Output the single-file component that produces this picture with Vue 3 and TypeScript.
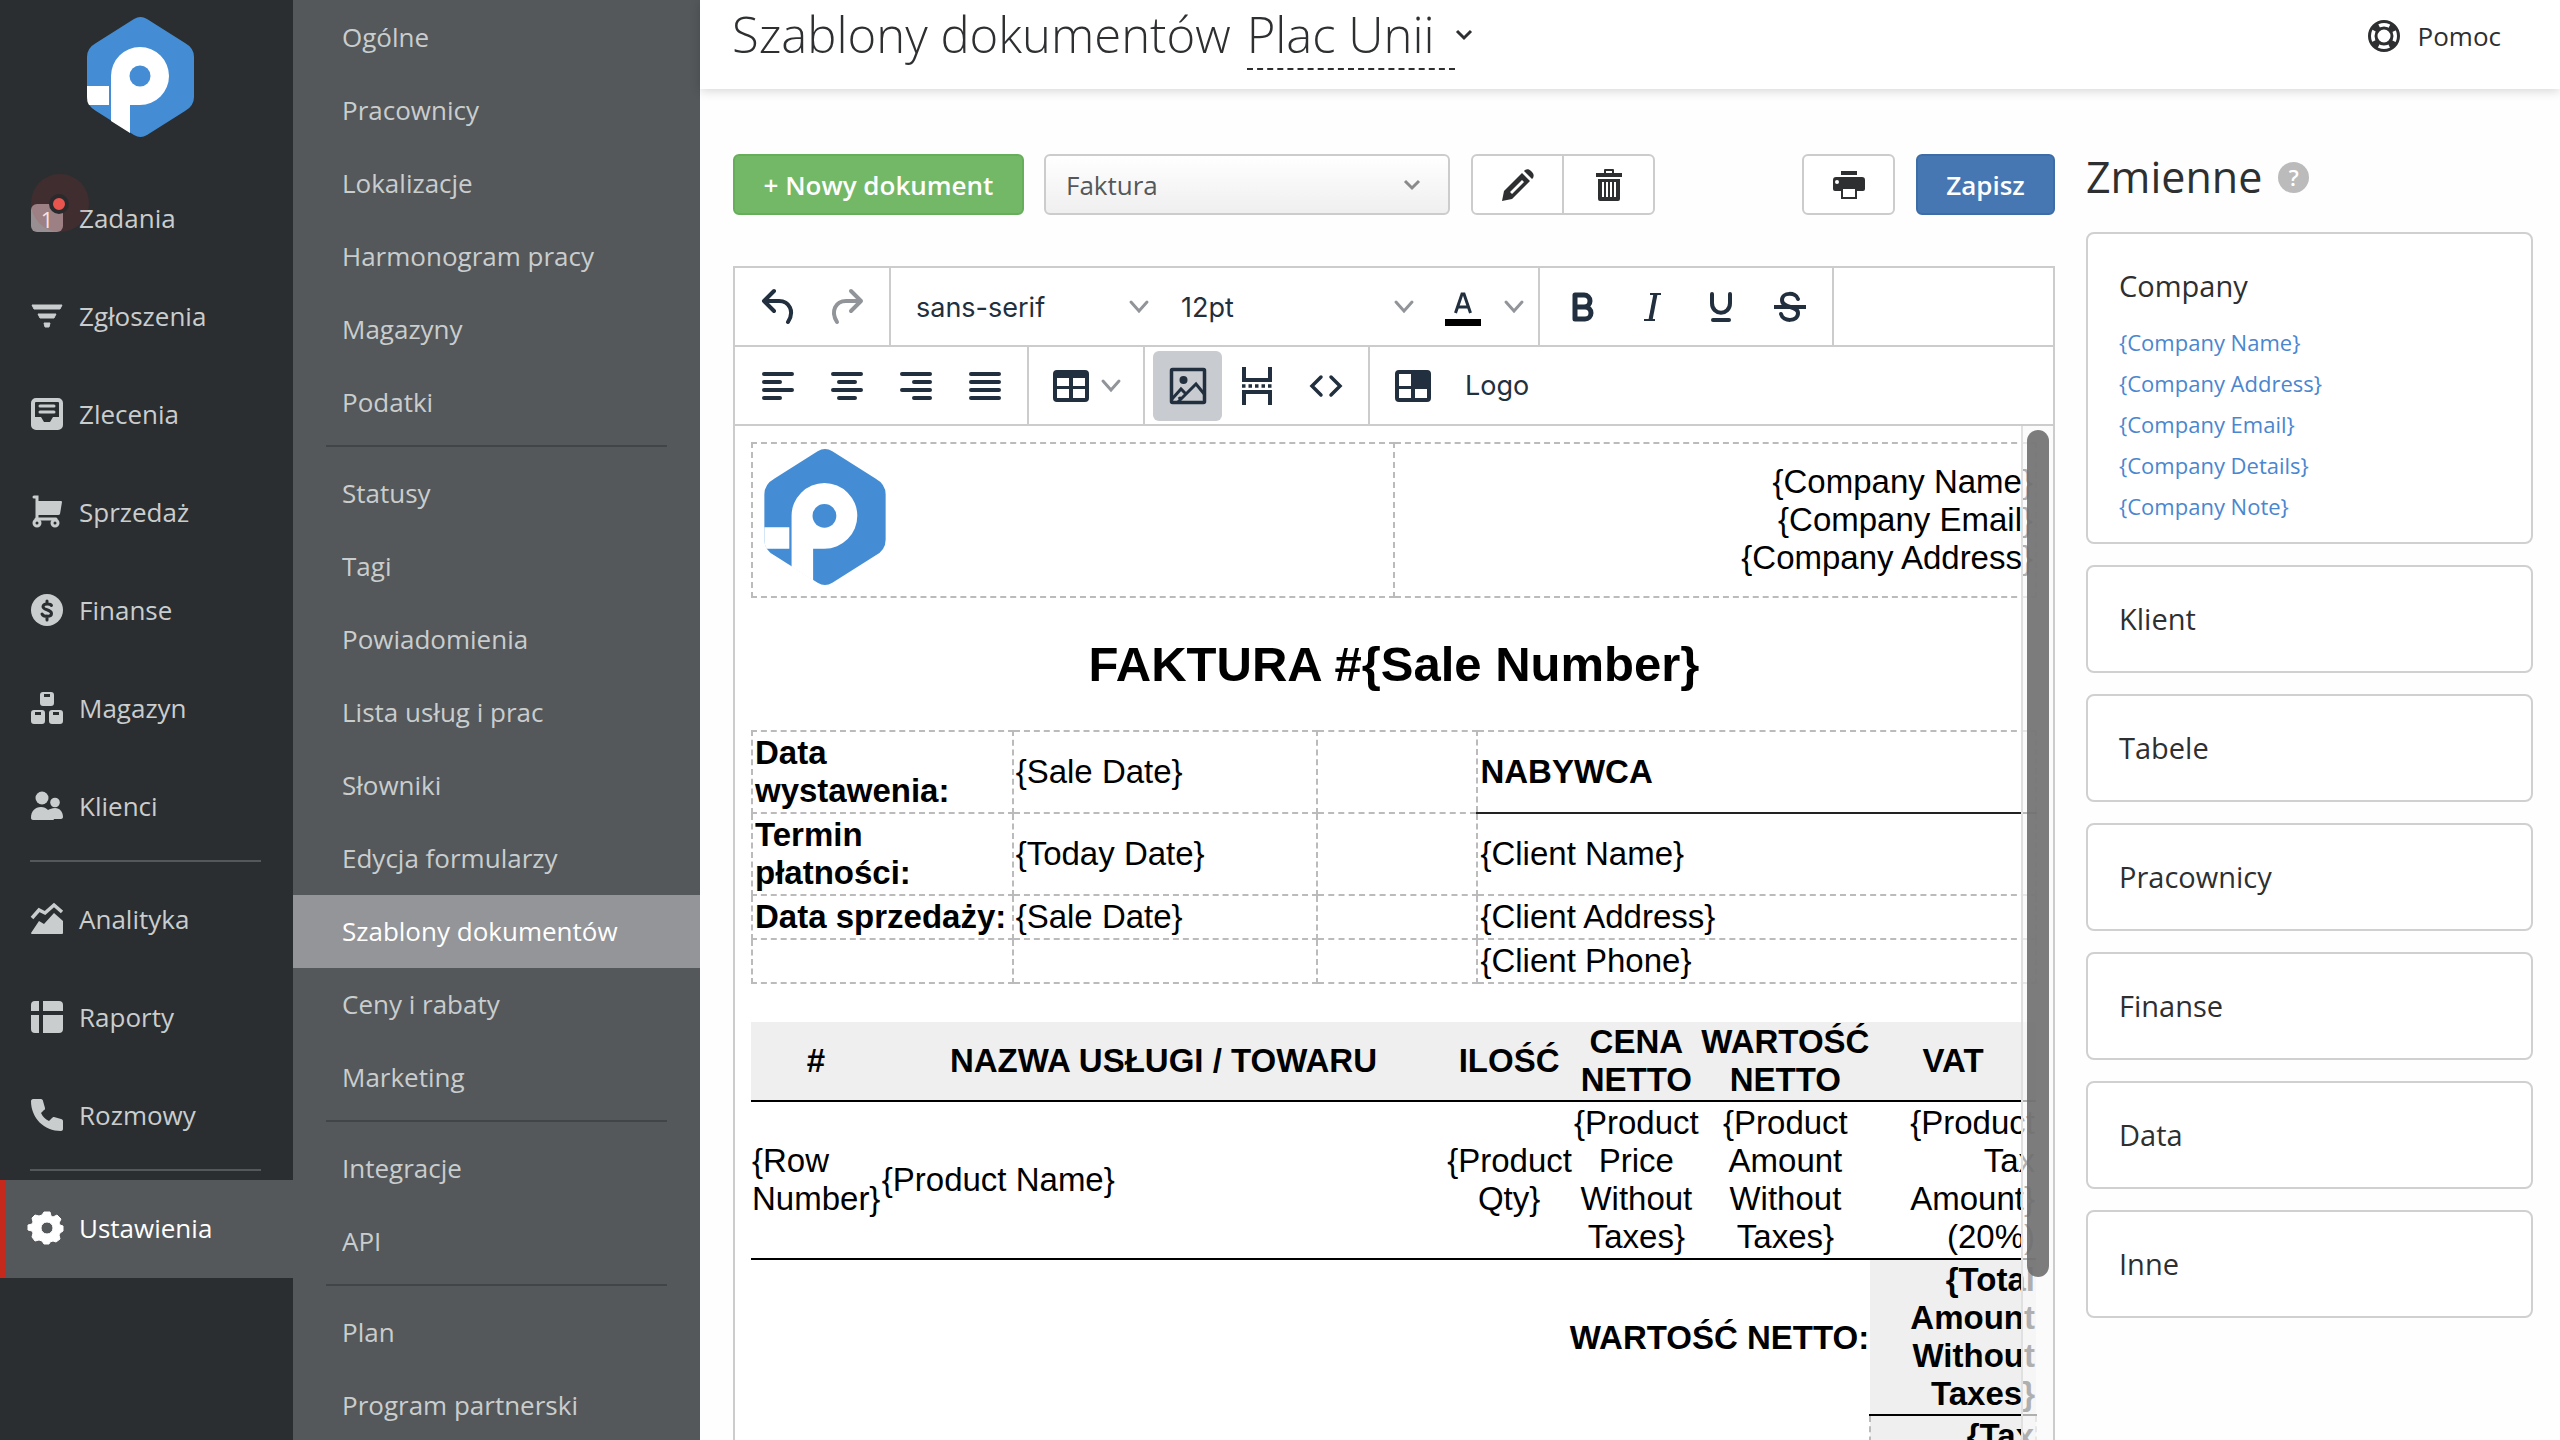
<script setup lang="ts">
import { ref } from 'vue'

interface NavItem { label: string; icon: string; badge?: string; active?: boolean }

const icons: Record<string, string> = {
  requests: '<path d="M1 5h30l-2 4H3zM7 14h18l-2 4H9zM13 23h6l-1 4h-4z" stroke="currentColor" stroke-width="1" stroke-linejoin="round"/>',
  orders: '<path fill-rule="evenodd" d="M5 0h22a5 5 0 0 1 5 5v22a5 5 0 0 1-5 5H5a5 5 0 0 1-5-5V5a5 5 0 0 1 5-5zm0 4a1 1 0 0 0-1 1v14h6l3 5h6l3-5h6V5a1 1 0 0 0-1-1z"/><path d="M9 8h14M9 14h14" stroke="currentColor" stroke-width="3" stroke-linecap="round"/>',
  sales: '<path d="M7 5h23a1 1 0 0 1 1 1l-2 12a2 2 0 0 1-2 1H7z"/><path d="M3 1h3v22M5 23h20" fill="none" stroke="currentColor" stroke-width="3" stroke-linecap="round"/><circle cx="6" cy="27" r="3" fill="none" stroke="currentColor" stroke-width="3"/><circle cx="24" cy="27" r="3" fill="none" stroke="currentColor" stroke-width="3"/>',
  finance: '<circle cx="16" cy="16" r="16"/><path d="M20.500 11.500c-1-2-8-2.500-8.500 1-.4 4 8.500 2.500 8.500 7 0 4-8 3.500-9.500.5M16 7v3M16 22v4" fill="none" stroke="#2a2e30" stroke-width="3" stroke-linecap="round"/>',
  stock: '<path fill-rule="evenodd" d="M12 0h8a3 3 0 0 1 3 3v8a3 3 0 0 1-3 3h-8a3 3 0 0 1-3-3V3a3 3 0 0 1 3-3zm1 2v3h6V2zM3 18h8a3 3 0 0 1 3 3v8a3 3 0 0 1-3 3H3a3 3 0 0 1-3-3v-8a3 3 0 0 1 3-3zm1 2v3h6v-3zM21 18h8a3 3 0 0 1 3 3v8a3 3 0 0 1-3 3h-8a3 3 0 0 1-3-3v-8a3 3 0 0 1 3-3zm1 2v3h6v-3z"/>',
  clients: '<circle cx="11" cy="8" r="6.500"/><circle cx="24" cy="12.500" r="4.800"/><path d="M0 28c0-7 4-11 10-11 3 0 5 1 7 3 2-1 4-2 7-2 5 0 8 4 8 9 0 1-1 2-2 2h-7c0 1-1 1-2 1H2c-1 0-2-1-2-2z"/>',
  analytics: '<path d="M0 30 8 18l5 3 10-11 9 8v12a1 1 0 0 1-1 1H1a1 1 0 0 1-1-1z"/><path d="m1 15 7-8 6 3 9-8 8 7" fill="none" stroke="currentColor" stroke-width="3.500"/>',
  reports: '<path d="M4 0h4v10H0V4a4 4 0 0 1 4-4zM12 0h16a4 4 0 0 1 4 4v6H12zM0 14h8v18H4a4 4 0 0 1-4-4zM12 14h20v14a4 4 0 0 1-4 4H12z"/>',
  calls: '<path d="M2 0h8c1 0 2 1 2 2l2 7c0 1 0 2-1 2l-3 3c2 4 4 6 8 8l3-3c1-1 1-1 2-1l7 2c1 0 2 1 2 2v8c0 1-1 2-2 2C13 32 0 19 0 2c0-1 1-2 2-2z"/>',
  settings: '<path fill-rule="evenodd" d="M13 0h6l1 4 2 1 4-2 4 4-2 4 1 2 3 1v5l-3 2-1 2 1 4-4 3-3-1-3 1-1 2h-5l-2-3-3-1-4 1-3-4 1-4-1-2-4-1v-5l4-1 1-2-1-4 3-3 4 1 3-1zm3 10a6 6 0 1 0 0 12 6 6 0 0 0 0-12z" stroke="currentColor" stroke-width="1" stroke-linejoin="round"/>',
  undo: '<path d="M12 2 2 12l10 10M3 12h14c10 0 16 10 9 21" fill="none" stroke="currentColor" stroke-width="4" stroke-linecap="round" stroke-linejoin="round"/>',
  alignLeft: '<path d="M2 4h28M2 12h16M2 20h28M2 28h16" stroke="currentColor" stroke-width="4" stroke-linecap="round"/>',
  alignCenter: '<path d="M2 4h28M8 12h16M2 20h28M8 28h16" stroke="currentColor" stroke-width="4" stroke-linecap="round"/>',
  alignRight: '<path d="M2 4h28M14 12h16M2 20h28M14 28h16" stroke="currentColor" stroke-width="4" stroke-linecap="round"/>',
  alignJustify: '<path d="M2 4h28M2 12h28M2 20h28M2 28h28" stroke="currentColor" stroke-width="4" stroke-linecap="round"/>',
}

const logo = '<path fill="#448dd5" d="M47 2q6.500-4 13 0l38 24q9 5 9 14v40q0 9-9 14l-38 24q-6.500 4-13 0L9 94q-9-5-9-14V40q0-9 9-14z"/><path fill="#fff" d="M24 59a29 29 0 1 1 29 29H43v28L24 104zM0 69h22v19H2Q0 85 0 80z"/><circle cx="53" cy="59" r="10.500" fill="#448dd5"/>'

const mainNav: NavItem[][] = [
  [
    { label: 'Zadania', icon: '', badge: '1' },
    { label: 'Zgłoszenia', icon: 'requests' },
    { label: 'Zlecenia', icon: 'orders' },
    { label: 'Sprzedaż', icon: 'sales' },
    { label: 'Finanse', icon: 'finance' },
    { label: 'Magazyn', icon: 'stock' },
    { label: 'Klienci', icon: 'clients' },
  ],
  [
    { label: 'Analityka', icon: 'analytics' },
    { label: 'Raporty', icon: 'reports' },
    { label: 'Rozmowy', icon: 'calls' },
  ],
  [{ label: 'Ustawienia', icon: 'settings', active: true }],
]

const subNav: string[][] = [
  ['Ogólne', 'Pracownicy', 'Lokalizacje', 'Harmonogram pracy', 'Magazyny', 'Podatki'],
  ['Statusy', 'Tagi', 'Powiadomienia', 'Lista usług i prac', 'Słowniki', 'Edycja formularzy', 'Szablony dokumentów', 'Ceny i rabaty', 'Marketing'],
  ['Integracje', 'API'],
  ['Plan', 'Program partnerski'],
]
const currentSection = 'Szablony dokumentów'

const aligns = [
  { icon: 'alignLeft', label: 'Do lewej' },
  { icon: 'alignCenter', label: 'Wyśrodkuj' },
  { icon: 'alignRight', label: 'Do prawej' },
  { icon: 'alignJustify', label: 'Wyjustuj' },
]

const documentType = ref('Faktura')
const fontFamily = ref('sans-serif')
const fontSize = ref('12pt')

const openGroup = ref('Company')
const variableGroups = [
  { name: 'Company', items: ['{Company Name}', '{Company Address}', '{Company Email}', '{Company Details}', '{Company Note}'] },
  { name: 'Klient', items: [] },
  { name: 'Tabele', items: [] },
  { name: 'Pracownicy', items: [] },
  { name: 'Finanse', items: [] },
  { name: 'Data', items: [] },
  { name: 'Inne', items: [] },
]

const infoRows = [
  ['Data wystawenia:', '{Sale Date}', 'NABYWCA'],
  ['Termin płatności:', '{Today Date}', '{Client Name}'],
  ['Data sprzedaży:', '{Sale Date}', '{Client Address}'],
  ['', '', '{Client Phone}'],
]
</script>

<template>
  <div class="app">
    <aside class="sidebar">
      <a href="#" class="brand" aria-label="Strona główna">
        <svg viewBox="0 0 107 120" v-html="logo"></svg>
      </a>
      <nav aria-label="Menu główne">
        <ul v-for="(group, g) in mainNav" :key="g" class="main-group">
          <li v-for="item in group" :key="item.label">
            <a href="#" class="main-link" :class="{ active: item.active }">
              <span v-if="item.badge" class="badge">{{ item.badge }}</span>
              <svg v-else class="icon" viewBox="0 0 32 32" v-html="icons[item.icon]"></svg>
              <span>{{ item.label }}</span>
            </a>
          </li>
        </ul>
      </nav>
    </aside>

    <nav class="subnav" aria-label="Ustawienia">
      <ul v-for="(group, g) in subNav" :key="g" class="sub-group">
        <li v-for="label in group" :key="label">
          <a href="#" class="sub-link" :class="{ active: label === currentSection }">{{ label }}</a>
        </li>
      </ul>
    </nav>

    <div class="page">
      <header class="topbar">
        <h1>Szablony dokumentów</h1>
        <button type="button" class="location">
          <span>Plac Unii</span>
          <svg viewBox="0 0 18 12"><path d="m2 2 7 7 7-7" /></svg>
        </button>
        <a href="#" class="help">
          <svg class="icon" viewBox="0 0 32 32">
            <circle cx="16" cy="16" r="14.500" fill="none" stroke="currentColor" stroke-width="3" />
            <circle cx="16" cy="16" r="8" fill="none" stroke="currentColor" stroke-width="3" />
            <circle cx="16" cy="16" r="11.500" fill="none" stroke="currentColor" stroke-width="6" stroke-dasharray="7 11.060" stroke-dashoffset="-5.500" />
          </svg>
          <span>Pomoc</span>
        </a>
      </header>

      <div class="content">
        <main class="workspace">
          <div class="actions">
            <button type="button" class="btn green">+ Nowy dokument</button>
            <label class="doc-select">
              <select v-model="documentType" aria-label="Dokument"><option>Faktura</option></select>
              <svg viewBox="0 0 18 12"><path d="m2 2 7 7 7-7" /></svg>
            </label>
            <div class="btn-pair">
              <button type="button" class="btn" aria-label="Edytuj">
                <svg class="icon" viewBox="0 0 32 32"><path fill="currentColor" fill-rule="evenodd" d="m0 32 2-10L20 4l8 8L10 30zm8-9 2 2 12-12-2-2zM22 2l1-1c2-1 4-1 6 1l1 1c2 2 2 4 1 6l-1 1z" /></svg>
              </button>
              <button type="button" class="btn" aria-label="Usuń">
                <svg class="icon" viewBox="0 0 32 32"><path fill="currentColor" fill-rule="evenodd" d="M3 4h8V1q0-1 1-1h8q1 0 1 1v3h8v4H3zm10 0h6V2h-6zM5 10h22v20q0 2-2 2H7q-2 0-2-2zm4 3v15h2V13zm4 0v15h2V13zm4 0v15h2V13zm4 0v15h2V13z" /></svg>
              </button>
            </div>
            <button type="button" class="btn print" aria-label="Drukuj">
              <svg class="icon" viewBox="0 0 32 32"><path fill="currentColor" fill-rule="evenodd" d="M8 2h16v4H8zM3 8h26q3 0 3 3v9q0 2-2 2h-6v8H8v-8H2q-2 0-2-2v-9q0-3 3-3zm7 12v8h12v-8zM4 11a2 2 0 1 0 0 4 2 2 0 0 0 0-4z" /></svg>
            </button>
            <button type="button" class="btn blue">Zapisz</button>
          </div>

          <section class="editor" aria-label="Edytor szablonu">
            <div class="toolbar">
              <div class="tools">
                <button type="button" class="tool" aria-label="Cofnij"><svg class="arrow-icon" viewBox="0 0 32 36" v-html="icons.undo"></svg></button>
                <button type="button" class="tool muted" aria-label="Ponów"><svg class="arrow-icon flipped" viewBox="0 0 32 36" v-html="icons.undo"></svg></button>
              </div>
              <div class="tools">
                <label class="tool-select">
                  <select v-model="fontFamily" aria-label="Czcionka"><option>sans-serif</option></select>
                  <svg class="chevron" viewBox="0 0 20 14"><path d="m2 2 8 9 8-9" /></svg>
                </label>
                <label class="tool-select">
                  <select v-model="fontSize" aria-label="Rozmiar"><option>12pt</option></select>
                  <svg class="chevron" viewBox="0 0 20 14"><path d="m2 2 8 9 8-9" /></svg>
                </label>
                <button type="button" class="tool split color" aria-label="Kolor tekstu">
                  <svg class="wide-icon" viewBox="0 0 36 36"><path fill="#000" d="M0 30h36v7H0z" /><path d="m10.500 24 6.500-19h2l6.500 19M13 18h10" fill="none" stroke="currentColor" stroke-width="3" /></svg>
                  <svg class="chevron" viewBox="0 0 20 14"><path d="m2 2 8 9 8-9" /></svg>
                </button>
              </div>
              <div class="tools">
                <button type="button" class="tool" aria-label="Pogrubienie"><svg class="icon" viewBox="0 0 32 32"><path d="M8 4h9a6 6 0 0 1 0 12H8zm0 12h10a6 6 0 0 1 0 12H8z" fill="none" stroke="currentColor" stroke-width="5" stroke-linejoin="round" /></svg></button>
                <button type="button" class="tool" aria-label="Kursywa"><svg class="icon" viewBox="0 0 32 32"><path d="M14 3h11M8 29h11M19 3l-5 26" fill="none" stroke="currentColor" stroke-width="2" /><path d="m19.500 3-5 26" stroke="currentColor" stroke-width="4" /></svg></button>
                <button type="button" class="tool" aria-label="Podkreślenie"><svg class="icon" viewBox="0 0 32 32"><path d="M7 3v9c0 13 18 13 18 0V3" fill="none" stroke="currentColor" stroke-width="4" stroke-linecap="round" /><path d="M8 29h16" stroke="currentColor" stroke-width="4" stroke-linecap="round" /></svg></button>
                <button type="button" class="tool" aria-label="Przekreślenie"><svg class="icon" viewBox="0 0 32 32"><path d="M24 8c-2-7-16-7-16 1 0 9 16 5 16 13 0 9-15 9-17 1" fill="none" stroke="currentColor" stroke-width="4" stroke-linecap="round" /><path d="M0 16h32" stroke="currentColor" stroke-width="4" /></svg></button>
              </div>
            </div>
            <div class="toolbar">
              <div class="tools">
                <button v-for="a in aligns" :key="a.icon" type="button" class="tool" :aria-label="a.label"><svg class="icon" viewBox="0 0 32 32" v-html="icons[a.icon]"></svg></button>
              </div>
              <div class="tools">
                <button type="button" class="tool split table" aria-label="Tabela">
                  <svg class="wide-icon" viewBox="0 0 36 36"><path fill="currentColor" fill-rule="evenodd" d="M4 2h28q4 0 4 4v24q0 4-4 4H4q-4 0-4-4V6q0-4 4-4zm0 8v8h12v-8zm16 0v8h12v-8zM4 21v9h12v-9zm16 0v9h12v-9z" /></svg>
                  <svg class="chevron" viewBox="0 0 20 14"><path d="m2 2 8 9 8-9" /></svg>
                </button>
              </div>
              <div class="tools">
                <button type="button" class="tool on" aria-label="Obraz" aria-pressed="true"><svg class="wide-icon" viewBox="0 0 36 36"><rect x="1.500" y="1.500" width="33" height="33" rx="1" fill="none" stroke="currentColor" stroke-width="3.500" /><circle cx="13.500" cy="12" r="4" fill="currentColor" /><path d="m2 31 9-10 5 5M8 34l18-18 9 11M9 29l2 3" fill="none" stroke="currentColor" stroke-width="3" /></svg></button>
                <button type="button" class="tool" aria-label="Podział strony"><svg class="tall-icon" viewBox="0 0 32 40"><path d="M3 1v13h26V1M3 39V26h26v13" fill="none" stroke="currentColor" stroke-width="4" /><path d="M1 20h30" stroke="currentColor" stroke-width="3.500" stroke-dasharray="3.500 3" /></svg></button>
                <button type="button" class="tool" aria-label="Kod źródłowy"><svg class="icon" viewBox="0 0 32 32"><path d="M11 7 2 16l9 9M21 7l9 9-9 9" fill="none" stroke="currentColor" stroke-width="3.500" stroke-linecap="round" /></svg></button>
              </div>
              <div class="tools">
                <button type="button" class="tool" aria-label="Szablon"><svg class="wide-icon" viewBox="0 0 36 36"><path fill="currentColor" fill-rule="evenodd" d="M4 2h28q4 0 4 4v24q0 4-4 4H4q-4 0-4-4V6q0-4 4-4zm0 4v12h12V6zm0 15v9h12v-9zm16 0v9h12v-9z" /></svg></button>
                <button type="button" class="tool text">Logo</button>
              </div>
            </div>

            <div class="canvas">
              <div class="doc">
                <table class="grid header-table">
                  <tbody>
                    <tr>
                      <td><svg class="doc-logo" viewBox="0 0 107 120" v-html="logo"></svg></td>
                      <td class="right">{Company Name}<br />{Company Email}<br />{Company Address}</td>
                    </tr>
                  </tbody>
                </table>

                <h2>FAKTURA #{Sale Number}</h2>

                <table class="grid info-table">
                  <colgroup><col class="i1" /><col class="i2" /><col class="i3" /><col /></colgroup>
                  <tbody>
                    <tr v-for="(row, r) in infoRows" :key="r">
                      <th scope="row">{{ row[0] }}</th>
                      <td>{{ row[1] }}</td>
                      <td></td>
                      <td :class="{ buyer: r === 0 }">{{ row[2] }}</td>
                    </tr>
                  </tbody>
                </table>

                <table class="items-table">
                  <colgroup><col class="c1" /><col class="c2" /><col class="c3" /><col class="c4" /><col class="c5" /><col /></colgroup>
                  <thead>
                    <tr>
                      <th>#</th><th>NAZWA USŁUGI / TOWARU</th><th>ILOŚĆ</th><th>CENA NETTO</th><th>WARTOŚĆ NETTO</th><th>VAT</th>
                    </tr>
                  </thead>
                  <tbody>
                    <tr class="product">
                      <td>{Row Number}</td>
                      <td>{Product Name}</td>
                      <td class="center">{Product Qty}</td>
                      <td class="center">{Product Price Without Taxes}</td>
                      <td class="center">{Product Amount Without Taxes}</td>
                      <td class="right">{Product Tax Amount} (20%)</td>
                    </tr>
                    <tr>
                      <th colspan="5" scope="row" class="right">WARTOŚĆ NETTO:</th>
                      <td class="total">{Total Amount Without Taxes}</td>
                    </tr>
                    <tr>
                      <th colspan="5" scope="row" class="right"></th>
                      <td class="total dashed">{Tax Amount}</td>
                    </tr>
                  </tbody>
                </table>
              </div>
              <div class="scrollbar"><div class="thumb"></div></div>
            </div>
          </section>
        </main>

        <aside class="variables">
          <h2>Zmienne <button type="button" class="hint" aria-label="Pomoc: zmienne">?</button></h2>
          <section v-for="group in variableGroups" :key="group.name" class="card" :class="{ open: group.name === openGroup }">
            <h3>{{ group.name }}</h3>
            <ul v-if="group.name === openGroup">
              <li v-for="item in group.items" :key="item"><a href="#">{{ item }}</a></li>
            </ul>
          </section>
        </aside>
      </div>
    </div>
  </div>
</template>

<style>
body { margin: 0; }
</style>

<style scoped>
*, ::before, ::after { box-sizing: border-box; }
ul { list-style: none; margin: 0; padding: 0; }
a { color: inherit; text-decoration: none; }
button, select { font: inherit; color: inherit; margin: 0; cursor: pointer; }
svg { display: block; flex: none; fill: currentColor; overflow: visible; }

.app {
  display: flex;
  height: 100vh;
  overflow: hidden;
  background: #fefefe;
  color: #2d2f31;
  font: 26px/36px "Open Sans", "Noto Sans", sans-serif;
}
.icon { width: 32px; height: 32px; }
.wide-icon { width: 36px; height: 36px; }
.tall-icon { width: 32px; height: 40px; }
.arrow-icon { width: 32px; height: 36px; }

/* main navigation */
.sidebar { flex: none; width: 293px; background: #2a2e30; color: #cacdce; }
.brand { display: block; height: 170px; padding: 17px 0 0 87px; }
.brand svg { width: 107px; height: 120px; }
.main-group + .main-group { padding-top: 15px; position: relative; }
.main-group + .main-group::before {
  content: "";
  position: absolute;
  top: 4px;
  left: 30px;
  right: 32px;
  height: 2px;
  background: #54585a;
}
.main-link {
  display: flex;
  align-items: center;
  gap: 16px;
  height: 98px;
  padding: 0 0 2px 25px;
  border-left: 6px solid transparent;
}
.main-link.active { background: #54585a; border-color: #c4291c; color: #fff; }
.badge {
  position: relative;
  width: 32px;
  height: 28px;
  border-radius: 6px;
  background: #978f91;
  color: #fff;
  font-size: 22px;
  line-height: 30px;
  text-align: center;
}
.badge::before {
  content: "";
  position: absolute;
  left: 0;
  top: -30px;
  width: 58px;
  height: 58px;
  border-radius: 50%;
  background: rgba(200, 40, 50, 0.14);
}
.badge::after {
  content: "";
  position: absolute;
  left: 18px;
  top: -10px;
  width: 20px;
  height: 20px;
  border: 4px solid #2a2a2d;
  border-radius: 50%;
  background: #e8554e;
}

/* settings navigation */
.subnav { flex: none; width: 407px; padding-top: 1px; background: #54585a; color: #cacdce; }
.sub-group + .sub-group { padding-top: 18px; position: relative; }
.sub-group + .sub-group::before {
  content: "";
  position: absolute;
  top: 6px;
  left: 33px;
  right: 33px;
  height: 2px;
  background: #414547;
}
.sub-link { display: flex; align-items: center; height: 73px; padding: 0 0 2px 49px; }
.sub-link.active { background: #949599; color: #fff; }

/* top bar */
.page { flex: 1; min-width: 0; display: flex; flex-direction: column; }
.topbar {
  flex: none;
  display: flex;
  align-items: flex-start;
  height: 89px;
  padding: 0 59px 0 32px;
  background: #fff;
  box-shadow: 0 2px 10px rgba(0, 0, 0, 0.16);
}
h1, .location { font-size: 49px; line-height: 68px; font-weight: 300; margin: 0; }
.location {
  display: flex;
  align-items: center;
  margin-left: 16px;
  padding: 0;
  border: 0;
  background: none;
}
.location span { padding-right: 20px; border-bottom: 2px dashed #2d2f31; }
.location svg, .doc-select svg { width: 18px; height: 12px; fill: none; stroke: currentColor; stroke-width: 3; }
.help { display: flex; align-items: center; gap: 18px; height: 72px; margin-left: auto; }

/* actions */
.content { flex: 1; min-height: 0; display: flex; gap: 31px; padding: 65px 27px 0 33px; }
.workspace { flex: 1; min-width: 0; display: flex; flex-direction: column; }
.actions { display: flex; margin-bottom: 51px; }
.btn {
  display: flex;
  align-items: center;
  justify-content: center;
  width: 93px;
  height: 61px;
  padding: 0;
  border: 2px solid #ccc;
  border-radius: 6px;
  background: #fff;
}
.green { width: 291px; border-color: #67ae5b; background: #73b867; color: #fff; font-weight: 600; }
.blue { width: 139px; margin-left: 21px; border-color: #3d6ca6; background: #4677b3; color: #fff; font-weight: 600; }
.print { margin-left: auto; }
.doc-select { position: relative; width: 406px; margin: 0 21px 0 20px; color: #8a8a8a; }
.doc-select select {
  appearance: none;
  width: 100%;
  height: 61px;
  padding: 0 20px;
  border: 2px solid #ccc;
  border-radius: 6px;
  background: linear-gradient(#fff, #efefef);
  color: #55585a;
}
.doc-select svg { position: absolute; right: 29px; top: 25px; pointer-events: none; }
.btn-pair { display: flex; }
.btn-pair .btn:first-child { border-radius: 6px 0 0 6px; }
.btn-pair .btn:last-child { margin-left: -2px; border-radius: 0 6px 6px 0; }

/* editor */
.editor {
  flex: 1;
  min-height: 0;
  display: flex;
  flex-direction: column;
  border: 2px solid #ccc;
  border-bottom: 0;
  background: #fff;
  color: #222f3e;
}
.toolbar {
  flex: none;
  display: flex;
  height: 79px;
  border-bottom: 2px solid #ccc;
  font-family: Inter, "Liberation Sans", sans-serif;
  font-size: 27px;
}
.tools { display: flex; align-items: center; padding: 0 8px; border-right: 2px solid #ccc; }
.toolbar:nth-child(2) .tools:last-child { border-right: 0; }
.tool {
  display: flex;
  align-items: center;
  justify-content: center;
  width: 69px;
  height: 70px;
  padding: 0;
  border: 0;
  border-radius: 6px;
  background: none;
}
.tool.on { background: #c8cbcf; }
.tool.muted { color: #919599; }
.tool.split { justify-content: flex-start; padding-left: 16px; }
.tool.color { width: 101px; gap: 23px; }
.tool.table { width: 98px; gap: 12px; }
.tool.text { width: auto; padding: 0 18px; }
.flipped { transform: scaleX(-1); }
.chevron { width: 20px; height: 14px; fill: none; stroke: #919599; stroke-width: 3; stroke-linecap: round; }
.tool-select { position: relative; width: 265px; }
.tool-select select {
  appearance: none;
  width: 100%;
  height: 70px;
  padding: 2px 17px 0;
  border: 0;
  background: none;
}
.tool-select .chevron { position: absolute; right: 15px; top: 28px; pointer-events: none; }

.canvas { flex: 1; min-height: 0; position: relative; overflow: hidden; }
.doc { padding: 16px; color: #000; font: 33px/38px "Liberation Sans", Arial, sans-serif; }
.doc table { width: 100%; border-collapse: collapse; table-layout: fixed; }
.doc th { text-align: left; }
.grid td, .grid th { height: 44px; padding: 2px; border: 2px dashed #bbb; }
.grid .buyer { border-bottom: 2px solid #222; font-weight: 700; }
.doc-logo { width: 122px; height: 136px; margin: 3px 0 9px 9px; }
.doc h2 { margin: 38px 0; font-size: 49px; line-height: 56px; text-align: center; }
.i1 { width: 20.300%; }
.i2 { width: 23.700%; }
.i3 { width: 12.500%; }
.doc .items-table { margin-top: 38px; }
.items-table td, .items-table th { padding: 1px; }
.items-table thead th { padding: 1px 0; background: #efefef; border-bottom: 2px solid #000; text-align: center; }
.product td { padding: 2px 1px; border-bottom: 2px solid #000; }
.c1 { width: 10.100%; }
.c2 { width: 44%; }
.c3 { width: 9.800%; }
.c4 { width: 10%; }
.c5 { width: 13.200%; }
.doc .right { text-align: right; }
.doc .center { text-align: center; }
.doc .total { background: #efefef; border-bottom: 2px solid #000; font-weight: 700; text-align: right; }
.doc .dashed { border-left: 2px dashed #bbb; border-right: 2px dashed #bbb; }
.scrollbar {
  position: absolute;
  top: 0;
  right: 0;
  bottom: 0;
  width: 32px;
  padding: 4px 4px 0;
  border-left: 2px solid #e0e0e0;
  background: rgba(250, 250, 250, 0.7);
}
.thumb { height: 847px; border-radius: 12px; background: rgba(110, 110, 110, 0.9); }

/* variables */
.variables { flex: none; width: 447px; }
.variables h2 {
  display: flex;
  align-items: center;
  gap: 16px;
  margin: 0 0 32px;
  font-size: 43px;
  line-height: 46px;
  font-weight: 500;
}
.hint {
  width: 31px;
  height: 31px;
  padding: 0;
  border: 0;
  border-radius: 50%;
  background: #bbb;
  color: #fff;
  font-size: 22px;
  line-height: 31px;
  font-weight: 600;
}
.card { margin-bottom: 21px; padding: 33px 31px; border: 2px solid #d0d0d0; border-radius: 8px; background: #fff; }
.card.open { padding-bottom: 15px; }
.card h3 { margin: 0; font-size: 29px; line-height: 38px; font-weight: 500; }
.card ul { margin-top: 17px; color: #4a86cf; font-size: 22px; line-height: 41px; }
</style>
